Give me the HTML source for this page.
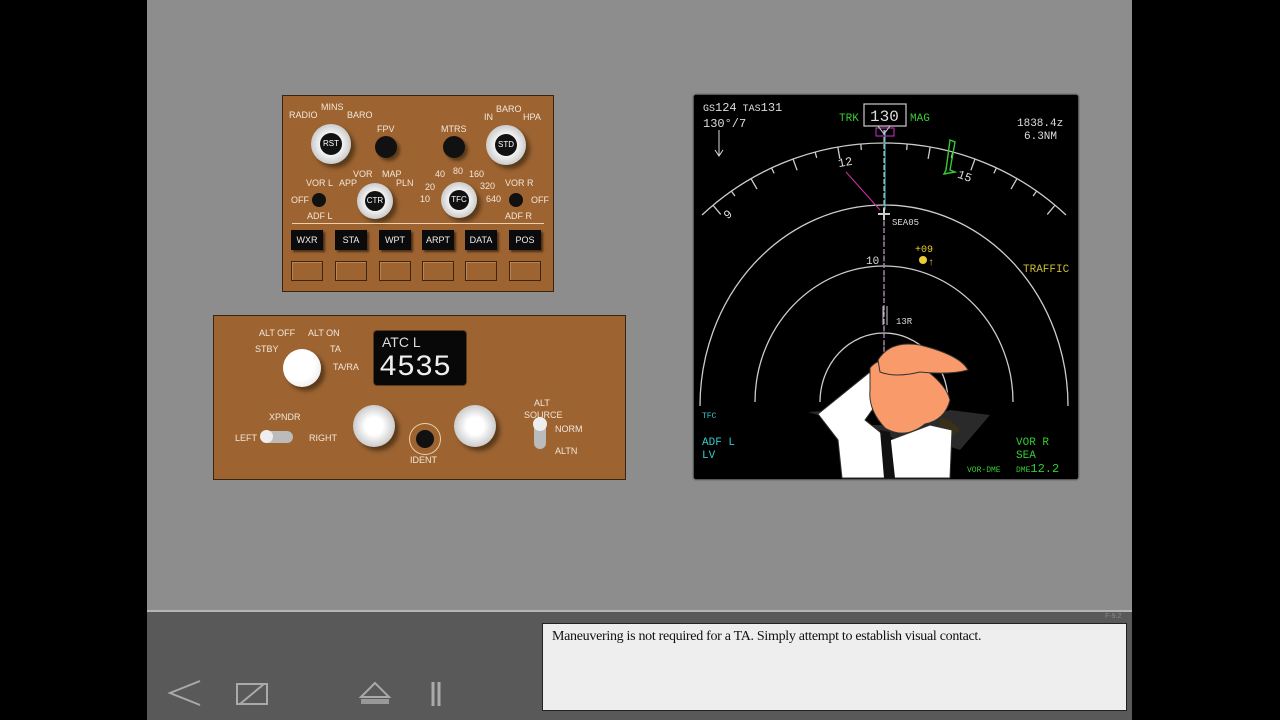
<!DOCTYPE html>
<html><head><meta charset="utf-8">
<style>
*{margin:0;padding:0;box-sizing:border-box}
body{width:1280px;height:720px;background:#000;position:relative;overflow:hidden;font-family:"Liberation Sans",sans-serif}
.abs{position:absolute}
#main{left:147px;top:0;width:985px;height:610px;background:#8d8d8d}
#bot{left:147px;top:610px;width:985px;height:110px;background:#595959;border-top:2px solid #b5b5b5}
.panel{background:#9d6432;border:1px solid #3a2410}
.t{position:absolute;color:#f2e6d8;font-size:9px;white-space:nowrap;line-height:1}
.btn{position:absolute;width:32px;height:20px;background:#0b0b0b;color:#eee;font-size:9px;text-align:center;line-height:20px;box-shadow:2px 2px 2px #4a2e14}
.ebtn{position:absolute;width:32px;height:20px;border:1px solid #3c260f;box-shadow:inset 1px 1px 0 #c08450}
.knob{position:absolute;border-radius:50%;background:radial-gradient(circle,#fff 30%,#ccc 70%,#999 100%);box-shadow:4px 4px 4px #5a3a1a}
.kc{position:absolute;border-radius:50%;background:#111;color:#fff;font-size:8px;text-align:center}
</style></head><body>
<div id="main" class="abs"></div>
<div id="bot" class="abs"></div>

<!-- EFIS panel -->
<div class="abs panel" style="left:282px;top:95px;width:272px;height:197px">
  <div class="t" style="left:6px;top:15px">RADIO</div>
  <div class="t" style="left:38px;top:7px">MINS</div>
  <div class="t" style="left:64px;top:15px">BARO</div>
  <div class="knob" style="left:28px;top:28px;width:40px;height:40px"></div>
  <div class="kc" style="left:37px;top:37px;width:22px;height:22px;line-height:22px">RST</div>
  <div class="t" style="left:94px;top:29px">FPV</div>
  <div class="kc" style="left:92px;top:40px;width:22px;height:22px;box-shadow:3px 3px 3px #5a3a1a"></div>
  <div class="t" style="left:158px;top:29px">MTRS</div>
  <div class="kc" style="left:160px;top:40px;width:22px;height:22px;box-shadow:3px 3px 3px #5a3a1a"></div>
  <div class="t" style="left:201px;top:17px">IN</div>
  <div class="t" style="left:213px;top:9px">BARO</div>
  <div class="t" style="left:240px;top:17px">HPA</div>
  <div class="knob" style="left:203px;top:29px;width:40px;height:40px"></div>
  <div class="kc" style="left:212px;top:38px;width:22px;height:22px;line-height:22px">STD</div>
  <div class="t" style="left:23px;top:83px">VOR L</div>
  <div class="t" style="left:8px;top:100px">OFF</div>
  <div class="t" style="left:24px;top:116px">ADF L</div>
  <div class="kc" style="left:29px;top:97px;width:14px;height:14px"></div>
  <div class="t" style="left:70px;top:74px">VOR</div>
  <div class="t" style="left:56px;top:83px">APP</div>
  <div class="t" style="left:99px;top:74px">MAP</div>
  <div class="t" style="left:113px;top:83px">PLN</div>
  <div class="knob" style="left:74px;top:87px;width:36px;height:36px"></div>
  <div class="kc" style="left:82px;top:95px;width:20px;height:20px;line-height:20px">CTR</div>
  <div class="t" style="left:152px;top:74px">40</div>
  <div class="t" style="left:170px;top:71px">80</div>
  <div class="t" style="left:186px;top:74px">160</div>
  <div class="t" style="left:142px;top:87px">20</div>
  <div class="t" style="left:197px;top:86px">320</div>
  <div class="t" style="left:137px;top:99px">10</div>
  <div class="t" style="left:203px;top:99px">640</div>
  <div class="knob" style="left:158px;top:86px;width:36px;height:36px"></div>
  <div class="kc" style="left:166px;top:94px;width:20px;height:20px;line-height:20px">TFC</div>
  <div class="t" style="left:222px;top:83px">VOR R</div>
  <div class="t" style="left:248px;top:100px">OFF</div>
  <div class="t" style="left:222px;top:116px">ADF R</div>
  <div class="kc" style="left:226px;top:97px;width:14px;height:14px"></div>
  <div class="abs" style="left:9px;top:127px;width:252px;height:1px;background:#f0d0a8"></div>
  <div class="btn" style="left:8px;top:134px">WXR</div>
  <div class="btn" style="left:52px;top:134px">STA</div>
  <div class="btn" style="left:96px;top:134px">WPT</div>
  <div class="btn" style="left:139px;top:134px">ARPT</div>
  <div class="btn" style="left:182px;top:134px">DATA</div>
  <div class="btn" style="left:226px;top:134px">POS</div>
  <div class="ebtn" style="left:8px;top:165px"></div>
  <div class="ebtn" style="left:52px;top:165px"></div>
  <div class="ebtn" style="left:96px;top:165px"></div>
  <div class="ebtn" style="left:139px;top:165px"></div>
  <div class="ebtn" style="left:182px;top:165px"></div>
  <div class="ebtn" style="left:226px;top:165px"></div>
</div>

<!-- Transponder panel -->
<div class="abs panel" style="left:213px;top:315px;width:413px;height:165px">
  <div class="t" style="left:45px;top:13px">ALT OFF</div>
  <div class="t" style="left:94px;top:13px">ALT ON</div>
  <div class="t" style="left:41px;top:29px">STBY</div>
  <div class="t" style="left:116px;top:29px">TA</div>
  <div class="t" style="left:119px;top:47px">TA/RA</div>
  <div class="knob" style="left:69px;top:33px;width:38px;height:38px;background:radial-gradient(circle at 40% 40%,#fff 50%,#ddd 100%)"></div>
  <div class="abs" style="left:159px;top:14px;width:94px;height:56px;background:#080808;border-radius:4px;border:1px solid #5a3a1a"></div>
  <div class="t" style="left:168px;top:19px;font-size:14px;color:#ddd">ATC L</div>
  <div class="t" style="left:165px;top:37px;font-size:30px;color:#eee;letter-spacing:0px;font-family:'Liberation Mono',monospace">4535</div>
  <div class="t" style="left:55px;top:97px">XPNDR</div>
  <div class="t" style="left:21px;top:118px">LEFT</div>
  <div class="t" style="left:95px;top:118px">RIGHT</div>
  <div class="abs" style="left:47px;top:115px;width:32px;height:12px;background:#bbb;border-radius:6px"></div>
  <div class="abs" style="left:46px;top:114px;width:13px;height:13px;background:#eee;border-radius:50%"></div>
  <div class="knob" style="left:139px;top:89px;width:42px;height:42px"></div>
  <div class="knob" style="left:240px;top:89px;width:42px;height:42px"></div>
  <div class="abs" style="left:196px;top:108px;width:30px;height:30px;border-radius:50%;background:#111;border:6px solid #9d6432;box-shadow:0 0 0 1px #f0d0a8"></div>
  <div class="t" style="left:196px;top:140px">IDENT</div>
  <div class="t" style="left:320px;top:83px">ALT</div>
  <div class="t" style="left:310px;top:95px">SOURCE</div>
  <div class="t" style="left:341px;top:109px">NORM</div>
  <div class="t" style="left:341px;top:131px">ALTN</div>
  <div class="abs" style="left:320px;top:103px;width:12px;height:30px;background:#bbb;border-radius:6px"></div>
  <div class="abs" style="left:319px;top:101px;width:14px;height:14px;background:#eee;border-radius:50%"></div>
</div>

<!-- ND -->
<svg class="abs" style="left:692px;top:93px" width="388" height="388" viewBox="692 93 388 388" id="nd">
<rect x="693" y="94" width="386" height="386" fill="#000" stroke="#777" stroke-width="1.5" rx="3"/>
<g fill="none" stroke="#ccc" stroke-width="1.3">
<path d="M700 406 A184 201 0 0 1 1068 406" />
<path d="M755 402 A129 136 0 0 1 1013 402"/>
<path d="M820 402 A64 69 0 0 1 948 402"/>
<path id="compass" d="M702 215 A266 266 0 0 1 1066 215"/>
</g>
<g id="ticks" stroke="#ccc" stroke-width="1.3"></g>
<line x1="884" y1="130" x2="884" y2="400" stroke="#aaa" stroke-dasharray="5 2" stroke-width="1.3"/>
<line x1="885" y1="130" x2="885" y2="210" stroke="#5cc" stroke-width="1"/>
<line x1="884" y1="210" x2="884" y2="400" stroke="#c5c" stroke-width="0.8" stroke-dasharray="2 3"/>
<line x1="846" y1="172" x2="880" y2="210" stroke="#c3a" stroke-width="1"/>
<rect x="864" y="104" width="42" height="22" fill="none" stroke="#ccc" stroke-width="1.2"/>
<rect x="876" y="128" width="18" height="8" fill="none" stroke="#c3c" stroke-width="1"/>
<path d="M878 126 L890 126 L884 134Z" fill="none" stroke="#ccc"/>
<path d="M950 140 L955 142 L950 170 L955 172 L944 174 L946 170Z" fill="none" stroke="#3c3" stroke-width="1.4"/>
<path d="M878 214 h12 M884 208 v12" stroke="#ccc" stroke-width="2"/>
<line x1="883" y1="306" x2="883" y2="325" stroke="#ccc"/><line x1="887" y1="306" x2="887" y2="325" stroke="#ccc"/>
<circle cx="923" cy="260" r="4" fill="#ec3"/>
<g font-family="Liberation Mono,monospace" font-size="12">
<text x="703" y="111" fill="#ddd" font-size="10">GS<tspan font-size="12">124</tspan> TAS<tspan font-size="12">131</tspan></text>
<text x="703" y="127" fill="#ddd" font-size="12">130°/7</text>
<text x="839" y="121" fill="#3c3" font-size="11">TRK</text>
<text x="870" y="121" fill="#ddd" font-size="16">130</text>
<text x="910" y="121" fill="#3c3" font-size="11">MAG</text>
<text x="1017" y="126" fill="#ddd" font-size="11">1838.4z</text>
<text x="1024" y="139" fill="#ddd" font-size="11">6.3NM</text>
<text x="838" y="166" fill="#ddd" font-size="12" transform="rotate(-10 845 162)">12</text>
<text x="958" y="180" fill="#ddd" font-size="12" transform="rotate(20 965 175)">15</text>
<text x="724" y="218" fill="#ddd" font-size="12" transform="rotate(-40 728 214)">9</text>
<text x="892" y="225" fill="#ddd" font-size="9">SEA05</text>
<text x="866" y="264" fill="#ddd" font-size="11">10</text>
<text x="915" y="252" fill="#ec3" font-size="10">+09</text>
<text x="928" y="265" fill="#ec3" font-size="10">↑</text>
<text x="1023" y="272" fill="#cb3" font-size="11">TRAFFIC</text>
<text x="896" y="324" fill="#ddd" font-size="9">13R</text>
<text x="702" y="418" fill="#3cc" font-size="8">TFC</text>
<text x="702" y="445" fill="#3cc" font-size="11">ADF L</text>
<text x="702" y="458" fill="#3cc" font-size="11">LV</text>
<text x="1016" y="445" fill="#3c3" font-size="11">VOR R</text>
<text x="1016" y="458" fill="#3c3" font-size="11">SEA</text>
<text x="967" y="472" fill="#3c3" font-size="8">VOR-DME</text>
<text x="1016" y="472" fill="#3c3" font-size="8">DME<tspan font-size="12">12.2</tspan></text>
</g>
<path d="M719 130 v25 M715 150 l4 6 4-6" stroke="#ddd" fill="none"/>
<!-- cartoon -->
<path d="M808 412 L840 410 L870 425 L900 425 L950 410 L990 415 L960 450 L930 440 L900 440Z" fill="#2a2a2a"/>
<path d="M940 418 q10 0 20 12 q-10 10 -20 6Z" fill="#3a3018"/>
<path d="M818 414 L870 372 L885 392 L865 420 L890 440 L930 425 L952 430 L950 478 L842 478 L838 440Z" fill="#fff" stroke="#333" stroke-width="1"/>
<path d="M880 430 L884 478 L895 478 L890 432Z" fill="#111"/>
<path d="M870 368 Q880 355 910 360 Q945 380 950 400 Q945 420 925 424 Q905 440 885 428 Q868 410 870 390Z" fill="#f99a6a" stroke="#333" stroke-width="1"/>
<path d="M878 360 Q890 340 920 345 Q960 355 968 370 Q950 375 920 372 Q895 378 880 372Z" fill="#f99a6a" stroke="#333" stroke-width="1"/>
</svg>

<!-- bottom bar -->
<div class="abs" style="left:1105px;top:613px;color:#888;font-size:7px">F-9.2</div>
<div class="abs" style="left:542px;top:623px;width:585px;height:88px;background:#eeeeee;border:1px solid #222"></div>
<div class="abs" style="left:552px;top:629px;font-family:'Liberation Serif',serif;font-size:14px;color:#111;letter-spacing:-0.3px">Maneuvering is not required for a TA. Simply attempt to establish visual contact.</div>
<svg class="abs" style="left:160px;top:675px" width="300" height="40">
<path d="M40 6 L10 18 L40 30" fill="none" stroke="#aaa" stroke-width="2"/>
<rect x="77" y="9" width="30" height="20" fill="none" stroke="#aaa" stroke-width="2"/>
<path d="M80 29 L104 9" stroke="#aaa" stroke-width="2"/>
<path d="M215 8 L201 22 L229 22Z" fill="none" stroke="#aaa" stroke-width="2"/>
<rect x="201" y="24" width="28" height="5" fill="#999"/>
<path d="M273 7 v24 M279 7 v24" stroke="#aaa" stroke-width="3"/>
</svg>
<script>
var g=document.getElementById('ticks'),cx=884,cy=409,R=266;
for(var a=-40;a<=40;a+=5){if(a==0)continue;var r=a*Math.PI/180,l=(a%10==0)?12:6;
var x1=cx+R*Math.sin(r),y1=cy-R*Math.cos(r),x2=cx+(R-l)*Math.sin(r),y2=cy-(R-l)*Math.cos(r);
var ln=document.createElementNS('http://www.w3.org/2000/svg','line');
ln.setAttribute('x1',x1);ln.setAttribute('y1',y1);ln.setAttribute('x2',x2);ln.setAttribute('y2',y2);g.appendChild(ln);}
</script>
</body></html>
